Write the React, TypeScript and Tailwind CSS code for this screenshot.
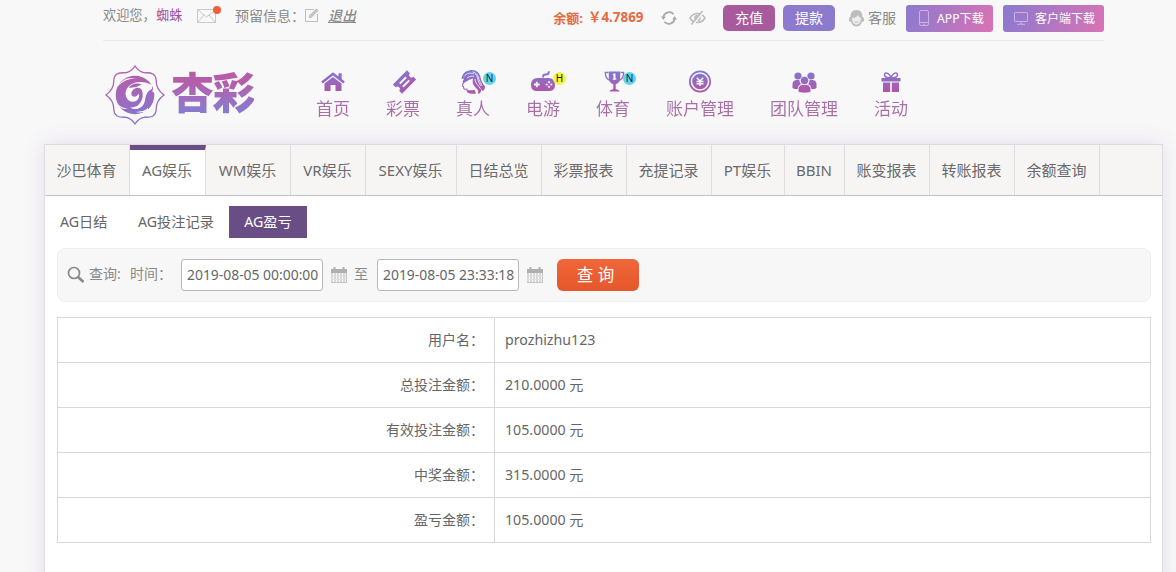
import { type ReactNode } from "react"

const tabs = [
  { name: "沙巴体育", width: "w-[85px]" },
  { name: "AG娱乐", width: "w-[76px]", active: true },
  { name: "WM娱乐", width: "w-[85px]" },
  { name: "VR娱乐", width: "w-[75px]" },
  { name: "SEXY娱乐", width: "w-[91px]" },
  { name: "日结总览", width: "w-[85px]" },
  { name: "彩票报表", width: "w-[85px]" },
  { name: "充提记录", width: "w-[85px]" },
  { name: "PT娱乐", width: "w-[73px]" },
  { name: "BBIN", width: "w-[60px]" },
  { name: "账变报表", width: "w-[85px]" },
  { name: "转账报表", width: "w-[85px]" },
  { name: "余额查询", width: "w-[85px]" },
]

const rows = [
  ["用户名：", "prozhizhu123"],
  ["总投注金额：", "210.0000 元"],
  ["有效投注金额：", "105.0000 元"],
  ["中奖金额：", "315.0000 元"],
  ["盈亏金额：", "105.0000 元"],
]

function NavIcon({ children }: { children: ReactNode }) {
  return (
    <svg width="28" height="26" viewBox="0 0 28 26" fill="url(#brand)">
      {children}
    </svg>
  )
}

const HomeIcon = (
  <NavIcon>
    <path d="M14 3.300 2.200 12.600l1.500 1.800L14 6.400l10.300 8 1.500-1.800-3.100-2.500V4.200h-3.200v3.300z" />
    <path d="M14 8 5.500 14.600V22h6v-6h5v6h6v-7.400z" />
  </NavIcon>
)

const TicketIcon = (
  <NavIcon>
    <g transform="rotate(-45 15.500 13)">
      <path
        fillRule="evenodd"
        d="M5.500 6.500h20v4a2.500 2.500 0 0 0 0 5v4h-20v-4a2.500 2.500 0 0 0 0-5zM11 9.800v1.900h9V9.800zM11 14.300v1.900h9v-1.900z"
      />
    </g>
  </NavIcon>
)

const LadyIcon = (
  <NavIcon>
    <path d="M2.500 10C3 5 6 2 11 1.200c6-.8 9.500 2.300 10.500 6.800.6 4 2 6 4.500 9.500.3 2-1 3.500-2.500 4.500l-1.500-2c.5 3-1 4.500-3 5 1-3-.2-4.500-2.500-6.500-2.500-2.500-3.500-5-2.500-9-2 .5-4 1-5.500 2.500C7 13 5.500 13 5 14.500L3.500 13 5 9.500z" />
    <path d="M7 20.500c3 1.200 6 1 8.500.3l1.500 3.700c-3 .6-6 .3-8.500-1z" />
    <path d="M4.500 13.500c-.5 2-1.500 3-1 3.500l1 .5c0 2.500.5 3.200 4 2.500" fill="none" stroke="url(#brand)" strokeWidth="1.100" />
    <path d="M5 7.500c3-3.500 6-4 10-2.500M8 9c3-2 5-2 7-1.500M16.500 5c3 3 1.500 7 5.500 12M13.500 3c4 .5 6 4 6.500 7.500 1 3 2 4 3 6M16 10c0 5 4 6 5.500 10" fill="none" stroke="#f8f8f8" strokeWidth=".8" />
  </NavIcon>
)

const GamepadIcon = (
  <NavIcon>
    <path d="M13.200 8.500c-.2-3 1-4 3.300-3.900C18 4.700 18.800 4 19 2.200h1.800c0 3-1.300 4.400-4 4.200-1.400 0-1.900.6-1.800 2.100z" />
    <path
      fillRule="evenodd"
      d="M8.500 9h11c4 0 6.500 2.800 6.500 6.800s-2 6.200-5 6.200H7c-3 0-5-2.200-5-6.200S4.500 9 8.500 9zm-1.600 3.700v1.900H5v1.800h1.900v1.900h1.800v-1.900h1.900v-1.800H8.700v-1.900z"
    />
    <g fill="#f8f8f8">
      <circle cx="20" cy="13.200" r="1.100" />
      <circle cx="20" cy="17.800" r="1.100" />
      <circle cx="17.700" cy="15.500" r="1.100" />
      <circle cx="22.300" cy="15.500" r="1.100" />
    </g>
  </NavIcon>
)

const TrophyIcon = (
  <NavIcon>
    <path d="M9.800 2.500h11.400v6c0 4-2 6-4.500 6.700v4.300c0 1.200 3.300 1 3.800 3h-10c.5-2 3.800-1.800 3.800-3v-4.300c-2.500-.7-4.500-2.700-4.500-6.700z" />
    <path d="M9.500 3.500H6.300c0 4 1.500 7 5 8M21.500 3.500h3.200c0 4-1.500 7-5 8" fill="none" stroke="url(#brand)" strokeWidth="1.300" />
    <path d="M15 4.500h1.500v5h.8v1.200h-3.600V9.500h.8V6h-.8v-.8z" fill="#f8f8f8" />
  </NavIcon>
)

const YenIcon = (
  <NavIcon>
    <circle cx="14" cy="12.500" r="10.200" fill="none" stroke="url(#brand)" strokeWidth="1.700" />
    <circle cx="14" cy="12.500" r="7.800" />
    <path d="m10.800 8.700 3.200 3.300 3.200-3.300M10.500 12.600h7M10.500 14.800h7M14 12v5" fill="none" stroke="#f8f8f8" strokeWidth="1.500" />
  </NavIcon>
)

const TeamIcon = (
  <NavIcon>
    <circle cx="8" cy="7" r="3.600" />
    <circle cx="21" cy="7" r="3.600" />
    <path d="M2.500 19v-4c0-2.500 2-4 4-4h3c0 2 .5 3 1.500 4l-2.500 2v3c-3 0-5 0-6-1zM26.500 19v-4c0-2.500-2-4-4-4h-3c0 2-.5 3-1.500 4l2.500 2v3c3 0 5 0 6-1z" />
    <path d="M8.100 23V20.500c0-3 2-5 4.400-5h4c2.400 0 4.400 2 4.400 5V23c-3 1.400-9.800 1.400-12.800 0z" stroke="#f8f8f8" strokeWidth=".8" />
    <circle cx="14.500" cy="11.500" r="4.200" stroke="#f8f8f8" strokeWidth=".8" />
  </NavIcon>
)

const GiftIcon = (
  <NavIcon>
    <path d="M4.500 9h19v3.500h-19zM6 13.500h7.200V23H6zM14.800 13.500H22V23h-7.200z" />
    <path d="M14 9C12.500 3.500 7.500 2.500 7.500 5.800 7.500 8 10.500 9 14 9c3.500 0 6.500-1 6.500-3.200C20.500 2.500 15.500 3.500 14 9z" fill="none" stroke="url(#brand)" strokeWidth="1.500" />
  </NavIcon>
)

const nav = [
  { name: "首页", icon: HomeIcon },
  { name: "彩票", icon: TicketIcon },
  { name: "真人", icon: LadyIcon, badge: "N" },
  { name: "电游", icon: GamepadIcon, badge: "H" },
  { name: "体育", icon: TrophyIcon, badge: "N" },
  { name: "账户管理", icon: YenIcon },
  { name: "团队管理", icon: TeamIcon },
  { name: "活动", icon: GiftIcon },
]

function TopBar() {
  return (
    <div className="ml-[103px] flex h-[41px] w-[1001px] items-start justify-between border-b border-[#ebebeb] text-sm text-[#888]">
      <div className="flex h-[31px] items-center">
        <span className="w-[53px] text-[13.200px] whitespace-nowrap">欢迎您，</span>
        <span className="w-[41px] text-[13.200px] text-[#a0519a]">蜘蛛</span>
        <svg className="-mt-px" width="26" height="20" viewBox="0 0 26 20" fill="none" stroke="#c8c8c8">
          <path d="M.5 4.500h18v13H.5zM.5 4.500l9 7.500 9-7.500M.5 17.500l6.500-7.500M18.500 17.500 12 10" />
          <circle cx="20" cy="5" r="4" fill="#f2603a" stroke="none" />
        </svg>
        <span className="ml-3 w-[70px] whitespace-nowrap">预留信息：</span>
        <svg className="-mt-px" width="14" height="14" viewBox="0 0 14 14" fill="none" stroke="#bdbdbd">
          <path d="M9 1.500H.5v12h12V6" />
          <path d="m4 10 .7-2.700L11.500.8l1.700 1.700-6.700 6.800z" fill="#c4c4c4" stroke="#bbb" strokeWidth=".6" />
        </svg>
        <span className="ml-[9px] font-medium italic underline underline-offset-1 [text-decoration-skip-ink:none]">退出</span>
      </div>

      <div className="flex h-[36px] items-center">
        <span className="text-[13px] font-bold whitespace-nowrap text-[#e66a41]">余额:</span>
        <span className="ml-[5px] w-[73px] text-[13.400px] font-bold whitespace-nowrap text-[#e66a41]">￥4.7869</span>
        <svg width="16" height="16" viewBox="0 0 16 16" fill="none" stroke="#aaa" strokeWidth="1.700">
          <path d="M2.300 7A6 6 0 0 1 12.700 4.200M13.700 9A6 6 0 0 1 3.300 11.800" />
          <path d="M0 6.500h4.800L2.400 10zM11.200 9.500H16L13.600 6z" fill="#aaa" stroke="none" />
        </svg>
        <svg className="ml-3" width="17" height="16" viewBox="0 0 17 16" fill="none" stroke="#bdbdbd" strokeWidth="1.600">
          <path d="M1 8c3.500-6 11.500-6 15 0-3.500 6-11.500 6-15 0z" />
          <circle cx="8.500" cy="8" r="2.500" fill="#bdbdbd" />
          <path d="M14.800 1 3.500 15" stroke="#f8f8f8" strokeWidth="2" />
          <path d="M13.500 1 2.500 14.500" />
        </svg>
        <button className="ml-[17px] h-[26px] w-[52px] rounded-[5px] bg-[#a85b9c] text-sm text-white">充值</button>
        <button className="ml-2 h-[26px] w-[52px] rounded-[5px] bg-[#8c7acd] text-sm text-white">提款</button>
        <svg className="ml-[13px]" width="17" height="18" viewBox="0 0 17 18">
          <path d="M8.500 1C4 1 2.500 4 2.500 8L1 9v3l2 1c1 3 3 4.500 5.500 4.500S13 16 14 13l2-1V9l-1.500-1c0-4-1.500-7-6-7z" fill="#bdbdbd" />
          <path d="M4 9c3 0 5-1 6-3 1 2 2 3 3 3 0 4-1.500 6.500-4.500 6.500S4 13 4 9z" fill="#ededed" />
          <path d="M6.500 12.500c1 1 3 1 4 0" fill="none" stroke="#aaa" strokeWidth=".8" />
        </svg>
        <span className="ml-[3px] w-[38px] text-sm">客服</span>
        <button className="flex h-[27px] w-[87px] items-center rounded-[3px] bg-linear-[110deg] from-[#8b7ad0] to-[#d973b4] pl-[13px] text-[12px] whitespace-nowrap text-white">
          <svg width="10" height="16" viewBox="0 0 10 16" fill="none" stroke="#c9b3e6">
            <rect x=".5" y=".5" width="9" height="15" rx="1.500" />
            <path d="M.5 12.500h9M4 14.200h2" />
          </svg>
          <span className="mt-px ml-[8px] text-[12.200px]">APP下载</span>
        </button>
        <button className="ml-[10px] flex h-[27px] w-[101px] items-center rounded-[3px] bg-linear-[110deg] from-[#8b7ad0] to-[#d973b4] pl-[11px] text-[12px] whitespace-nowrap text-white">
          <svg width="14" height="13" viewBox="0 0 14 13" fill="none" stroke="#c4b2e8">
            <rect x=".5" y=".5" width="13" height="9" rx=".5" />
            <path d="M7 9.500v2.500M3 12.300h8" />
          </svg>
          <span className="mt-px ml-[7px]">客户端下载</span>
        </button>
      </div>
    </div>
  )
}

function Logo() {
  return (
    <div className="flex w-[195px] items-start">
      <svg className="mt-[24px] ml-px" width="60" height="60" viewBox="0 0 60 60">
        <path
          d="M30 1C27.500 5 24.500 7.300 20 7.800 13 7.500 9.500 9 8.800 15 9 20 7.500 25.500 1 30c6.500 4.500 8 10 7.800 15 .7 6 4.200 7.500 11.200 7.200 4.500.5 7.500 2.800 10 6.800 2.500-4 5.500-6.300 10-6.800 7 .3 10.500-1.200 11.200-7.200C51 40 52.500 34.500 59 30c-6.500-4.500-8-10-7.800-15C50.500 9 47 7.500 40 7.800 35.500 7.300 32.500 5 30 1z"
          fill="none"
          stroke="url(#emblem)"
          strokeWidth="1.300"
        />
        <circle cx="30" cy="30" r="19.300" fill="url(#emblem)" />
        <g fill="#f8f8f8">
          <path d="M12 22c4-7 11-10.500 20-8.500-7-.5-14 2-20 8.500z" />
          <path d="M47 20c-6-3-13-4-19-1.500-6 2.500-8.500 8-7 13 1.500 4.500 6 6.500 10 4.500 2.500-1.500 3.500-4 3-7.500-2 3-4.500 4-6.500 2.500-2.500-2-.5-6.500 3.500-8 2.500-.8 5 0 6 2.500 1.500 4.500.5 8-1 11-2.500 4.500-6 6-11 6 5 3 11 1.500 13.500-3 2-3.500 1.500-7 3-10 1-3 3.500-4.500 5.500-5.500z" />
          <path d="M11 37c3 4 7 6 12 7-5 .5-9-1-12-7zM43 46c-4 1.500-8 2-12 1 5-.5 9-1 12-4z" />
          <path d="M50 22c-2 1-3 3-2.500 5 1.500.3 2.500 1 3.500 2z" />
        </g>
        <path d="M24 23c2-4 7-5.500 13-3.500-3 .5-5 3-8 2.800z" fill="url(#emblem)" />
      </svg>
      <span className="mt-[23px] ml-[6px] bg-linear-to-b from-[#b65da9] from-30% to-[#837bd3] to-85% bg-clip-text text-[43px] leading-[58px] font-black tracking-[-1.500px] text-transparent">
        杏彩
      </span>
    </div>
  )
}

function Header() {
  return (
    <div className="ml-[104px] flex h-[103px]">
      <Logo />
      <nav className="flex gap-9 pl-[17px]">
        {nav.map((item) => (
          <a key={item.name} className="relative flex flex-col items-center pt-[28px]">
            {item.icon}
            <span className="mt-px bg-linear-to-b from-[#a274b4] to-[#b06899] bg-clip-text text-[17px] leading-[26px] whitespace-nowrap text-transparent">
              {item.name}
            </span>
            {item.badge === "N" && (
              <b className="absolute top-[31px] left-[27px] size-[13px] rounded-full bg-[#5cd3f3] text-center text-[10px] leading-[13px] font-normal text-[#222]">
                N
              </b>
            )}
            {item.badge === "H" && (
              <b className="absolute top-[31px] left-[27px] size-[13px] rounded-full bg-[#f5f53c] text-center text-[10px] leading-[13px] font-normal text-[#222]">
                H
              </b>
            )}
          </a>
        ))}
      </nav>
    </div>
  )
}

function CalendarIcon() {
  return (
    <svg width="16" height="17" viewBox="0 0 16 17">
      <path d="M0 3h2.500V1h2v2h7V1h2v2H16v4H0z" fill="#b0b0b0" />
      <path d="M1 7v10M4 7v10M7 7v10M10 7v10M13 7v10M15.500 7v10" stroke="#c4c4c4" strokeWidth="1.200" />
      <path d="M0 10h16M0 13.500h16" stroke="#ddd" strokeWidth=".7" />
      <path d="M0 16.500h16" stroke="#c4c4c4" />
    </svg>
  )
}

function SearchBar() {
  return (
    <div className="mr-[11px] ml-3 mt-[10px] flex h-[54px] items-center rounded-[8px] border border-[#efefef] bg-[#f7f7f7] pl-[9px] text-sm text-[#888]">
      <svg className="-mt-px" width="18" height="17" viewBox="0 0 18 17" fill="none" stroke="#888">
        <circle cx="7" cy="7" r="5.500" strokeWidth="1.700" />
        <path d="m11 11 5.500 5" strokeWidth="2.500" />
      </svg>
      <span className="-mt-[3px] ml-1 w-[41px] whitespace-nowrap">查询:</span>
      <span className="-mt-[3px] w-[51px] whitespace-nowrap">时间：</span>
      <input
        className="h-[32px] w-[142px] rounded-[3px] border border-[#b8b8b8] bg-white pb-px pl-[5px] text-[13.900px] text-[#666]"
        defaultValue="2019-08-05 00:00:00"
      />
      <span className="-mt-px ml-2">
        <CalendarIcon />
      </span>
      <span className="-mt-[3px] ml-[7px] w-[23px]">至</span>
      <input
        className="h-[32px] w-[142px] rounded-[3px] border border-[#b8b8b8] bg-white pb-px pl-[5px] text-[13.900px] text-[#666]"
        defaultValue="2019-08-05 23:33:18"
      />
      <span className="-mt-px ml-2">
        <CalendarIcon />
      </span>
      <button className="ml-[14px] h-[32px] w-[82px] rounded-[6px] bg-linear-to-b from-[#f0673a] to-[#e4572a] pr-[5px] text-[16.500px] text-white">
        查 询
      </button>
    </div>
  )
}

export default function App() {
  return (
    <div className="h-[572px] w-[1176px] overflow-hidden bg-[#f8f8f8] font-['Noto_Sans','Noto_Sans_CJK_SC',sans-serif]">
      <svg width="0" height="0" className="absolute">
        <defs>
          <linearGradient id="brand" gradientUnits="userSpaceOnUse" x1="0" y1="3" x2="0" y2="24">
            <stop offset="0" stopColor="#8079d0" />
            <stop offset="1" stopColor="#b453a6" />
          </linearGradient>
          <linearGradient id="emblem" gradientUnits="userSpaceOnUse" x1="22" y1="0" x2="36" y2="60">
            <stop offset="0.100" stopColor="#bb5ba8" />
            <stop offset="0.900" stopColor="#8576cf" />
          </linearGradient>
        </defs>
      </svg>
      <TopBar />
      <Header />
      <main className="ml-[44px] h-[500px] w-[1119px] border border-[#dfdbe2] bg-white shadow-[0_0_20px_rgba(130,80,180,0.160)]">
        <div className="flex h-[51px] border-b border-[#c4c4c4] bg-[#f6f5f4] text-[15px] text-[#6a6a6a]">
          {tabs.map((tab) => (
            <a
              key={tab.name}
              className={
                tab.active
                  ? `${tab.width} shrink-0 border-t-[5px] border-r border-t-[#694e85] border-r-[#e0e0e0] bg-white pr-px text-center leading-[40px] whitespace-nowrap`
                  : `${tab.width} shrink-0 border-r border-[#dedede] pr-px text-center leading-[50px] whitespace-nowrap`
              }
            >
              {tab.name}
            </a>
          ))}
        </div>
        <div className="mt-[10px] flex h-[32px] text-[14.200px] leading-[31px] text-[#666]">
          <a className="ml-[15px] w-[78px] whitespace-nowrap">AG日结</a>
          <a className="w-[91px] whitespace-nowrap">AG投注记录</a>
          <a className="w-[78px] bg-[#694e85] text-center whitespace-nowrap text-white">AG盈亏</a>
        </div>
        <SearchBar />
        <table className="mt-[15px] ml-3 w-[1094px] table-fixed border-collapse text-sm text-[#666]">
          <tbody>
            {rows.map(([label, value]) => (
              <tr key={label} className="h-[45px]">
                <td className="w-[437px] border border-[#d8d8d8] pr-[10px] text-right">{label}</td>
                <td className="border border-[#d8d8d8] pl-[10px] text-[14.200px]">{value}</td>
              </tr>
            ))}
          </tbody>
        </table>
      </main>
    </div>
  )
}
